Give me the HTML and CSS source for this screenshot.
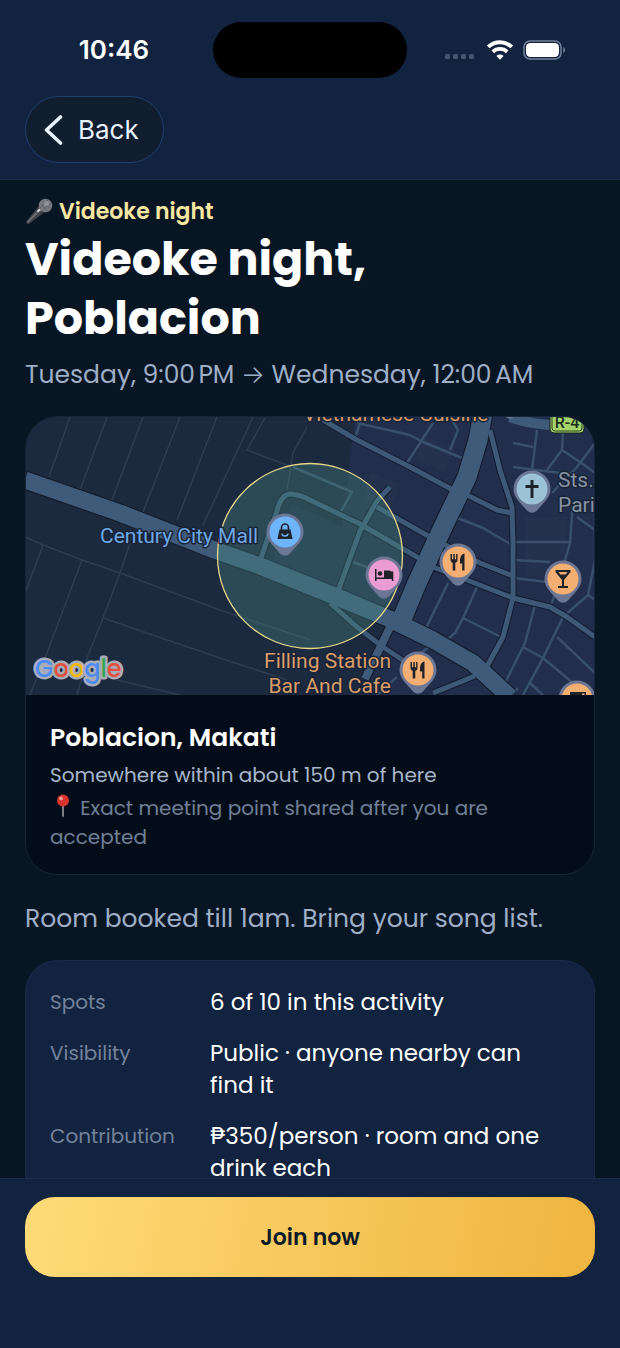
FILE: index.html
```
<!DOCTYPE html>
<html lang="en">
    <head>
        <meta charset="utf-8">
        <meta name="viewport" content="width=device-width, initial-scale=1">
        <title>Videoke night, Poblacion</title>
        <link rel="stylesheet" href="styles.css">
    </head>
    <body>
        <header class="top">
            <div class="status">
                <span class="time">10:46</span>
                <span class="island"></span>
                <span class="signals">
                    <svg class="dots" width="32" height="20" viewBox="0 0 32 20" fill="#46546c">
                        <rect x="0" y="14" width="5" height="5" rx="1.5"/>
                        <rect x="8" y="14" width="5" height="5" rx="1.5"/>
                        <rect x="16" y="14" width="5" height="5" rx="1.5"/>
                        <rect x="24" y="14" width="5" height="5" rx="1.5"/>
                    </svg>
                    <svg width="26" height="20" viewBox="0 0 26 20" fill="none" stroke="#fff" stroke-width="3.8">
                        <path d="M1.300 7a16.800 16.800 0 0 1 23.400 0"/>
                        <path d="M5.800 11.800a10.400 10.400 0 0 1 14.400 0"/>
                        <path d="M13 19.800l-3.600-3.700a5.100 5.100 0 0 1 7.200 0z" fill="#fff" stroke="none"/>
                    </svg>
                    <svg width="43" height="20" viewBox="0 0 43 20">
                        <rect x="1" y="1" width="37" height="18" rx="6" fill="none" stroke="#76829a" stroke-width="1.5"/>
                        <rect x="3" y="3" width="33" height="14" rx="4.2" fill="#fff"/>
                        <path d="M40.3 7v6c2.200-.9 2.200-5.100 0-6z" fill="#76829a"/>
                    </svg>
                </span>
            </div>
            <button class="back" type="button">
                <svg width="20" height="32" viewBox="0 0 20 32" fill="none" stroke="#e9f2ff" stroke-width="3.6" stroke-linecap="round" stroke-linejoin="round">
                    <path d="M16.500 3L2.500 16l14 13"/>
                </svg>
                Back
            </button>
        </header>

        <main class="content">
            <p class="kind">
                <svg width="28" height="28" viewBox="0 0 28 28">
                    <path d="M14.500 7L20.500 13.500 4.500 25.500C2.500 27 .2 25 1.600 23z" fill="#3e4147"/>
                    <path d="M15.500 9l2 2L3 25 1.800 24z" fill="#6a6d74"/>
                    <path d="M13.700 7.500l6.800 7 1.700-1.500-7-7z" fill="#25272b"/>
                    <circle cx="20.500" cy="7.500" r="6.800" fill="#777a80"/>
                    <path d="M16 6.500l6 6M18 3.500l7 7M15 10l8-8M18 12.500l8-8" stroke="#5b5e64" stroke-width="1"/>
                    <circle cx="21.500" cy="5.500" r="2.500" fill="#a4a6ab" opacity=".6"/>
                    <path d="M12.500 13.500l2.500-2" stroke="#d8dade" stroke-width="2"/>
                </svg>
                Videoke night
            </p>
            <h1>Videoke night, Poblacion</h1>
            <p class="when">Tuesday, 9:00&#8239;PM <span class="arrow">→</span> Wednesday, 12:00&#8239;AM</p>

            <section class="place">
                <svg class="map" viewBox="0 0 570 278" preserveAspectRatio="xMidYMid slice" role="img" aria-label="Map of Poblacion">
                    <defs>
                        <g id="pin">
                            <path d="M0-18.500A18.500 18.500 0 0 1 18.500 0C18.500 9 11 14 5 21.500Q0 26-5 21.500C-11 14-18.500 9-18.500 0A18.500 18.500 0 0 1 0-18.500z" fill="#6c7695"/>
                            <circle r="15.500"/>
                        </g>
                        <g id="food" fill="#20222a">
                            <path d="M-7.500-8v5.500c0 2.200 1 3 2.200 3.300V8.500h2.600V.8C-1.300.5-.5-.3-.5-2.500V-8h-1.400v5.200h-1.300V-8h-1.500v5.200H-6V-8z"/>
                            <path d="M6.500-8.500C3.500-8 2-5 2-1v2.500h2.200v7h2.300z"/>
                        </g>
                    </defs>
                    <rect width="570" height="278" fill="#1c2a40"/>
                    <path d="M330 0h240v278H340l25-66-58-26-60-40 20-60 50 24z" fill="#212e4c"/>
                    <path d="M345 55l30 12-12 30-25-12zM500 100h40v60h-40zM400 20l30 10-10 25-30-12z" fill="#25324e"/>

                    <g class="lots">
                        <path d="M45 0L24 60M82 0L55 73M118 0L87 83M155 0l-37 95M192 0l-40 103M228 0l-50 108"/>
                        <path d="M5 10L0 24M240 1l-18 32 45 17M282 10l-14 26-6 37"/>
                        <path d="M0 120l18 8 39 15 38 13 100 37 90 30M18 128L0 176M57 143L22 236 5 278"/>
                        <path d="M105 126l-10 30-17 45-16 40-10 37M78 201l117 40 67 22M92 263l63 15"/>
                    </g>

                    <g class="lanes">
                        <path d="M268 50l59 25-12 21M328 145l14 5M335 6l-5 15M332 6l53 12 13 7 44 18M408 6l-26 40M425 0l8 13-8 20"/>
                        <path d="M430 100l28 11 29 17M488 125h57M488 143l37 2M488 161l34 4"/>
                        <path d="M512 13l-5 40M488 26l20 4M488 50l47 6M538 15l-1 18-15 20M537 33l18 12 15 11M570 26l-18 24-25 26"/>
                        <path d="M548 85l-3 41-5 17-13 43M552 100l18 13M570 90v53l-7 35-25 22-20 41-20 37M563 178l7 5"/>
                        <path d="M510 188l-10 38-20 40M498 230l20 11 30 25M532 220l38 36M505 266l13 12"/>
                        <path d="M423 166l-23 47M452 170l-14 31-8 15-10 9M438 201l40 20M391 240l19-15M352 278l20-18M485 278l8-7"/>
                    </g>

                    <g class="streets street-edge">
                        <path d="M235 144l17-50q4-17 14-17 10 1 19 6l50 24 57 33 16 10 34 13 46 18 37 9 17 10 28 20"/>
                        <path d="M312 177l23-63 17-30 13-14M352 90l53 30 50 26 33 13"/>
                        <path d="M298 3l34 20 53 27 43 23 14 5 30 15 15 3"/>
                        <path d="M465 13l10 40 12 37 1 36v55l-10 39-18 33M408 276l42-17M305 186l27 24 26 20 24 16"/>
                    </g>
                    <g class="road-edge">
                        <path d="M0 63l95 33 97 38 43 15 77 31 53 22 43 21 40 23 37 34" stroke-width="19"/>
                        <path d="M458-4l-5 27-11 37-24 50-26 56-20 48" stroke-width="21"/>
                        <path d="M366 208l-26 54" stroke-width="10"/>
                    </g>
                    <g class="streets">
                        <path d="M235 144l17-50q4-17 14-17 10 1 19 6l50 24 57 33 16 10 34 13 46 18 37 9 17 10 28 20"/>
                        <path d="M312 177l23-63 17-30 13-14M352 90l53 30 50 26 33 13"/>
                        <path d="M298 3l34 20 53 27 43 23 14 5 30 15 15 3"/>
                        <path d="M465 13l10 40 12 37 1 36v55l-10 39-18 33M408 276l42-17M305 186l27 24 26 20 24 16"/>
                    </g>
                    <g class="road">
                        <path d="M0 63l95 33 97 38 43 15 77 31 53 22 43 21 40 23 37 34" stroke-width="17"/>
                        <path d="M458-4l-5 27-11 37-24 50-26 56-20 48" stroke-width="19"/>
                        <path d="M366 208l-26 54" stroke-width="8"/>
                        <path d="M485 0q20 8 60 9" stroke-width="10"/>
                    </g>

                    <circle cx="285" cy="139" r="92.500" fill="#4c9082" fill-opacity=".32" stroke="#e6d888" stroke-width="1.300"/>

                    <g class="labels">
                        <text x="278" y="4" fill="#d49a63">Vietnamese Cuisine</text>
                        <text x="75" y="126" fill="#6fa8e4">Century City Mall</text>
                        <text x="366" y="251" fill="#d99e68" text-anchor="end">Filling Station</text>
                        <text x="366" y="276" fill="#d99e68" text-anchor="end">Bar And Cafe</text>
                        <text x="533" y="70" fill="#8793a3">Sts.</text>
                        <text x="533" y="95" fill="#8793a3">Pari</text>
                    </g>

                    <rect x="525" y="-6" width="34" height="22" rx="4" fill="#a5d36c" stroke="#14231a" stroke-width="1"/>
                    <rect x="527" y="-4" width="30" height="18" rx="3" fill="none" stroke="#27401f" stroke-width="1"/>
                    <text class="route" x="542" y="11">R-4</text>

                    <use href="#pin" x="485" y="-22" fill="#f3ae72"/>
                    <g transform="translate(260 115)">
                        <use href="#pin" fill="#6db4fb"/>
                        <path d="M-5.500-2.500h11L7.500 7h-15z" fill="#20222a"/>
                        <path d="M-3.500-2v-2.500a3.500 3.500 0 0 1 7 0V-2" fill="none" stroke="#20222a" stroke-width="1.600"/>
                        <path d="M-3 1.500a3 2.500 0 0 0 6 0" fill="none" stroke="#6db4fb" stroke-width="1.400"/>
                    </g>
                    <g transform="translate(359 158)">
                        <use href="#pin" fill="#eb9cd2"/>
                        <path d="M-9-6h1.500v8.500H7.800V-3.500H9.300V6H7.800V4H-7.500V6H-9z" fill="#20222a"/>
                        <circle cx="-4" cy="-1.500" r="2.300" fill="#20222a"/>
                        <path d="M0-4.500h5q4 .5 4 4v3.500H0z" fill="#20222a"/>
                    </g>
                    <g transform="translate(433 145)">
                        <use href="#pin" fill="#f3ae72"/>
                        <use href="#food"/>
                    </g>
                    <g transform="translate(393 253)">
                        <use href="#pin" fill="#f3ae72"/>
                        <use href="#food"/>
                    </g>
                    <g transform="translate(538 162)">
                        <use href="#pin" fill="#f3ae72"/>
                        <path d="M-7.500-9h15v2L1 1v6h4v2H-5V7h4V1l-6.500-8zM-4.500-7l1.800 2.500h5.400L4.500-7z" fill="#20222a" fill-rule="evenodd"/>
                    </g>
                    <g transform="translate(507 72)">
                        <use href="#pin" fill="#9cc3d5"/>
                        <path d="M-1.500-9h3v5H6.500v3h-5V9h-3V-1h-5v-3h5z" fill="#20222a"/>
                    </g>
                    <g transform="translate(552 282)">
                        <use href="#pin" fill="#f3ae72"/>
                        <path d="M-7-7H9v6H4V5H-7zM5-5.500v3h2.500v-3z" fill="#20222a" fill-rule="evenodd"/>
                    </g>

                    <text class="google" x="10" y="260"><tspan fill="#4c8bf5">G</tspan><tspan fill="#e0503f">o</tspan><tspan fill="#f2b90c">o</tspan><tspan fill="#4c8bf5">g</tspan><tspan fill="#35a554">l</tspan><tspan fill="#e0503f">e</tspan></text>
                </svg>
                <div class="place-text">
                    <h2>Poblacion, Makati</h2>
                    <p class="radius">Somewhere within about 150 m of here</p>
                    <p class="note">
                        <svg width="25" height="24" viewBox="0 0 25 24">
                            <path d="M12.200 11h1.600v11l-.8 1.500-.8-1.500z" fill="#9a9ea5"/>
                            <circle cx="13" cy="6.500" r="6" fill="#d8332f"/>
                            <circle cx="11" cy="4.500" r="1.900" fill="#f59a90"/>
                        </svg>
                        Exact meeting point shared after you are accepted
                    </p>
                </div>
            </section>

            <p class="about">Room booked till 1am. Bring your song list.</p>

            <dl class="facts">
                <dt>Spots</dt>
                <dd>6 of 10 in this activity</dd>
                <dt>Visibility</dt>
                <dd>Public · anyone nearby can find it</dd>
                <dt>Contribution</dt>
                <dd>₱350/person · room and one drink each</dd>
            </dl>
        </main>

        <footer class="bottom">
            <button class="join" type="button">Join now</button>
        </footer>
    </body>
</html>
```
FILE: styles.css
```
*{
    margin: 0;
    padding: 0;
    box-sizing: border-box;
}
body{
    display: flex;
    flex-direction: column;
    height: 100vh;
    background: #081624;
    color: #fff;
    font-family: Poppins, Inter, sans-serif;
    font-size: 22px;
    line-height: 32px;
}
button{
    border: 0;
    font-family: inherit;
    cursor: pointer;
}
svg{
    flex: none;
}

/* header */
.top{
    flex: none;
    padding: 0 25px 16px;
    background: #12233f;
    border-bottom: 1px solid #1a2c49;
}
.status{
    display: grid;
    grid-template-columns: 1fr 194px 1fr;
    align-items: center;
    height: 96px;
    padding-top: 4px;
}
.time{
    padding-right: 10px;
    font-family: Inter, sans-serif;
    font-size: 26px;
    font-weight: 600;
    text-align: center;
}
.island{
    height: 56px;
    border-radius: 28px;
    background: #000;
}
.signals{
    display: flex;
    justify-content: flex-end;
    gap: 10px;
    padding-right: 29px;
}
.back{
    display: flex;
    align-items: center;
    gap: 14px;
    height: 67px;
    padding: 0 24px 0 18px;
    border: 1px solid #1f3f70;
    border-radius: 34px;
    background: #111e30;
    color: #e9f2ff;
    font-family: Inter, sans-serif;
    font-size: 26px;
    font-weight: 400;
}

/* activity */
.content{
    flex: 1;
    min-height: 0;
    overflow: hidden;
    padding: 14px 25px 0;
}
.kind{
    display: flex;
    align-items: center;
    gap: 6px;
    height: 36px;
    color: #f8e6a2;
    font-weight: 600;
}
h1{
    max-width: 400px;
    font-size: 46px;
    font-weight: 700;
    line-height: 59px;
}
.when,
.about{
    color: #9fafc6;
    font-size: 25px;
    line-height: 40px;
}
.when{
    margin: 7px 0 21px;
}
.arrow{
    font-weight: 300;
}
.place{
    overflow: hidden;
    border: 1px solid #14263b;
    border-radius: 32px;
    background: #030d19;
}
.map{
    display: block;
    width: 100%;
    height: 278px;
}
.lots path,
.lanes path,
.streets path,
.road path,
.road-edge path{
    fill: none;
    stroke-linejoin: round;
}
.lots{
    stroke: #2e3e51;
    stroke-width: 1.5;
}
.lanes{
    stroke: #38506d;
    stroke-width: 2.5;
}
.streets{
    stroke: #3d5976;
    stroke-width: 5;
}
.street-edge{
    stroke: #121c2e;
    stroke-width: 7;
}
.road{
    stroke: #3f5b79;
}
.road-edge{
    stroke: #101a2a;
}
.labels{
    font-family: Roboto, sans-serif;
    font-size: 21px;
    stroke: #182338;
    stroke-width: 3px;
    stroke-linejoin: round;
    paint-order: stroke;
}
.route{
    fill: #1b2c1d;
    font-family: Roboto, sans-serif;
    font-size: 16px;
    font-weight: 500;
    text-anchor: middle;
}
.google{
    font-family: Poppins, Lato, sans-serif;
    font-size: 24px;
    font-weight: 500;
    stroke: #a9adb8;
    stroke-width: 5px;
    stroke-linejoin: round;
    paint-order: stroke;
}
.place-text{
    padding: 26px 24px 22px;
}
h2{
    margin-bottom: 6px;
    font-size: 25px;
    font-weight: 600;
    line-height: 34px;
}
.radius,
.note{
    font-size: 20px;
    line-height: 29px;
}
.radius{
    margin-bottom: 4px;
    color: #a9b7cb;
}
.note{
    color: #718096;
}
.note svg{
    vertical-align: -3px;
}
.about{
    margin: 24px 0 21px;
}
.facts{
    display: grid;
    grid-template-columns: 160px 1fr;
    gap: 19px 0;
    padding: 25px 24px;
    border: 1px solid #172a47;
    border-radius: 32px;
    background: #12233f;
}
dt{
    color: #74839c;
    font-size: 20px;
}
dd{
    padding-right: 16px;
    font-size: 23px;
}

/* action bar */
.bottom{
    flex: none;
    padding: 18px 25px 71px;
    border-top: 1px solid #192c4a;
    background: #12233f;
}
.join{
    width: 100%;
    height: 80px;
    border-radius: 30px;
    background: linear-gradient(100deg, #ffdb78, #efb53f);
    color: #0b1a29;
    font-size: 22px;
    font-weight: 600;
}
```
